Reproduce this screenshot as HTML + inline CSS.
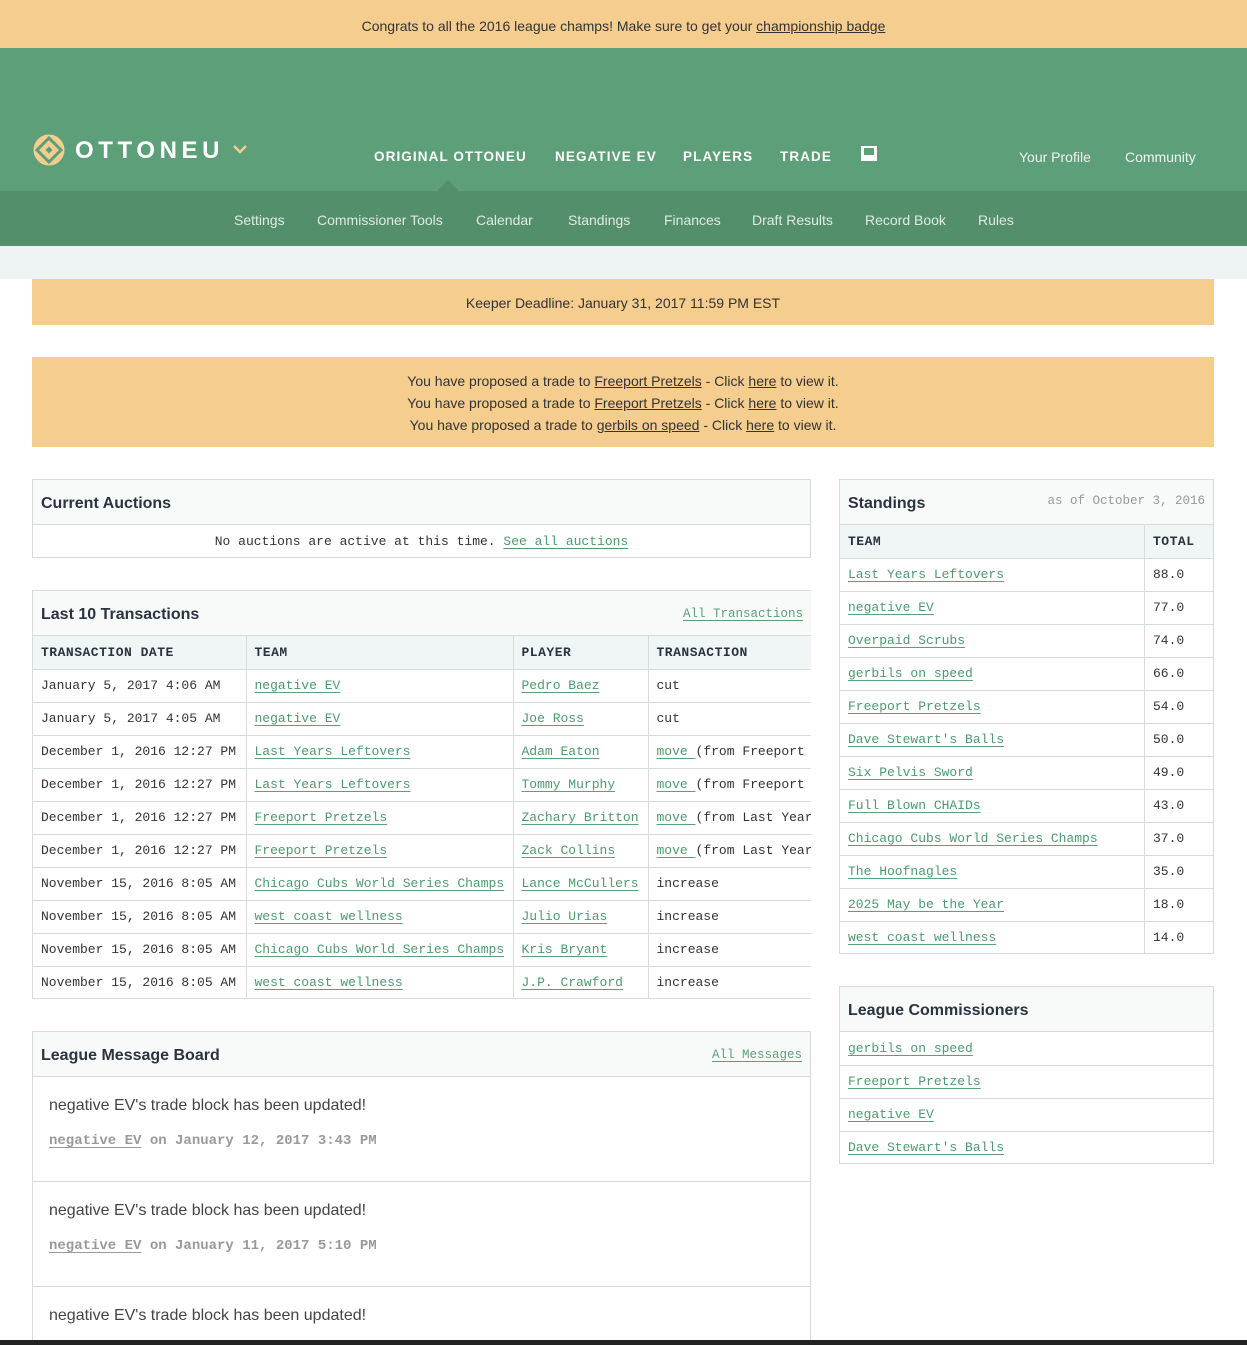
<!DOCTYPE html>
<html><head><meta charset="utf-8">
<style>
*{box-sizing:border-box;margin:0;padding:0}
html,body{width:1247px;height:1345px;overflow:hidden}
body{background:#fff;font-family:"Liberation Sans",sans-serif;color:#333;position:relative}
a{color:inherit}
.top{position:absolute;left:0;top:0;width:1247px;height:48px;background:#f5cd8e;text-align:center;font-size:14px;line-height:52px;color:#333}
.top a{text-decoration:underline}
.hdr{position:absolute;left:0;top:48px;width:1247px;height:143px;background:#5c9f79}
.sub{position:absolute;left:0;top:191px;width:1247px;height:55px;background:#548f6c}
.strip{position:absolute;left:0;top:246px;width:1247px;height:33px;background:#eef4f4}
.nav{position:absolute;top:149px;color:#fff;font-weight:bold;font-size:13.5px;letter-spacing:1.1px}
.rnav{position:absolute;top:149px;font-size:14px;color:#f0f4f0}
.sn{position:absolute;top:212px;color:#dfeae2;font-size:14px}
.banner{position:absolute;left:32px;width:1182px;background:#f5cd8e;text-align:center;font-size:14px;color:#333}
.banner a{text-decoration:underline}
.box{position:absolute;border:1px solid #d6dcdc;background:#fff;overflow:hidden}
.bh{height:45px;background:#f8fafa;border-bottom:1px solid #d6dcdc;padding-left:8px;font-weight:bold;font-size:16px;line-height:47px;color:#2a3340;position:relative}
.bh .r{position:absolute;right:8px;top:0;font-family:"Liberation Mono",monospace;font-weight:normal;font-size:12.5px;color:#5c9f79;text-decoration:underline;text-underline-offset:3px}
table{border-collapse:collapse;font-family:"Liberation Mono",monospace;font-size:13px;color:#333;white-space:nowrap}
td,th{height:33px;padding:0 8px;border-bottom:1px solid #d6dcdc;border-right:1px solid #d6dcdc;text-align:left}
th{background:#f0f5f5;font-weight:bold;color:#2a3340;letter-spacing:.5px}
td a{color:#4e9a6e;text-decoration:underline;text-decoration-color:#5c9f79;text-underline-offset:3px}
.msg{height:105px;border-bottom:1px solid #d6dcdc;padding:20px 0 0 16px}
.msg .t{font-size:16px;color:#444}
.msg .m{margin-top:18px;font-family:"Liberation Mono",monospace;font-size:14px;font-weight:bold;color:#999}
.msg .m a{text-decoration:underline;text-underline-offset:3px}
</style></head><body>
<div class="top">Congrats to all the 2016 league champs! Make sure to get your <a>championship badge</a></div>
<div class="hdr"></div>
<div class="sub"></div>
<div class="strip"></div>
<svg style="position:absolute;left:33px;top:134px" width="32" height="32" viewBox="0 0 32 32"><circle cx="16" cy="16" r="15.5" fill="#f5cd8e"/><path d="M16 4 L28 16 L16 28 L4 16Z" fill="none" stroke="#5c9f79" stroke-width="3"/><rect x="13.5" y="13.5" width="5" height="5" transform="rotate(45 16 16)" fill="#5c9f79"/></svg>
<div style="position:absolute;left:75px;top:137px;color:#fff;font-weight:bold;font-size:24px;letter-spacing:4.6px">OTTONEU</div>
<svg style="position:absolute;left:232px;top:144px" width="16" height="10"><path d="M2 2 L8 8 L14 2" stroke="#f5cd8e" stroke-width="2.5" fill="none"/></svg>
<div class="nav" style="left:374px">ORIGINAL OTTONEU</div>
<div class="nav" style="left:555px">NEGATIVE EV</div>
<div class="nav" style="left:683px">PLAYERS</div>
<div class="nav" style="left:780px">TRADE</div>
<div style="position:absolute;left:861px;top:146px;width:16px;height:15px;background:#fff"><div style="position:absolute;left:3px;top:2px;width:10px;height:7px;background:#5c9f79"></div></div>
<svg style="position:absolute;left:437px;top:180px" width="22" height="11"><path d="M0 11 L11 0 L22 11Z" fill="#548f6c"/></svg>
<div class="rnav" style="left:1019px">Your Profile</div>
<div class="rnav" style="left:1125px">Community</div>
<div class="sn" style="left:234px">Settings</div>
<div class="sn" style="left:317px">Commissioner Tools</div>
<div class="sn" style="left:476px">Calendar</div>
<div class="sn" style="left:568px">Standings</div>
<div class="sn" style="left:664px">Finances</div>
<div class="sn" style="left:752px">Draft Results</div>
<div class="sn" style="left:865px">Record Book</div>
<div class="sn" style="left:978px">Rules</div>

<div class="banner" style="top:279px;height:46px;line-height:48px">Keeper Deadline: January 31, 2017 11:59 PM EST</div>
<div class="banner" style="top:357px;height:90px;padding-top:13px;line-height:22px">You have proposed a trade to <a>Freeport Pretzels</a> - Click <a>here</a> to view it.<br>You have proposed a trade to <a>Freeport Pretzels</a> - Click <a>here</a> to view it.<br>You have proposed a trade to <a>gerbils on speed</a> - Click <a>here</a> to view it.</div>

<div class="box" style="left:32px;top:479px;width:779px;height:79px">
<div class="bh">Current Auctions</div>
<div style="text-align:center;font-family:'Liberation Mono',monospace;font-size:13px;line-height:33px">No auctions are active at this time. <a style="color:#4e9a6e;text-decoration:underline;text-underline-offset:3px">See all auctions</a></div>
</div>

<div class="box" style="left:32px;top:590px;width:779px;height:409px;border-right:none">
<div class="bh">Last 10 Transactions<span class="r">All Transactions</span></div>
<table style="width:800px">
<tr><th style="width:213px">TRANSACTION DATE</th><th style="width:267px">TEAM</th><th style="width:135px">PLAYER</th><th>TRANSACTION</th></tr>
<tr><td>January 5, 2017 4:06 AM</td><td><a>negative EV</a></td><td><a>Pedro Baez</a></td><td>cut</td></tr>
<tr><td>January 5, 2017 4:05 AM</td><td><a>negative EV</a></td><td><a>Joe Ross</a></td><td>cut</td></tr>
<tr><td>December 1, 2016 12:27 PM</td><td><a>Last Years Leftovers</a></td><td><a>Adam Eaton</a></td><td><a>move </a>(from Freeport</td></tr>
<tr><td>December 1, 2016 12:27 PM</td><td><a>Last Years Leftovers</a></td><td><a>Tommy Murphy</a></td><td><a>move </a>(from Freeport</td></tr>
<tr><td>December 1, 2016 12:27 PM</td><td><a>Freeport Pretzels</a></td><td><a>Zachary Britton</a></td><td><a>move </a>(from Last Year</td></tr>
<tr><td>December 1, 2016 12:27 PM</td><td><a>Freeport Pretzels</a></td><td><a>Zack Collins</a></td><td><a>move </a>(from Last Year</td></tr>
<tr><td>November 15, 2016 8:05 AM</td><td><a>Chicago Cubs World Series Champs</a></td><td><a>Lance McCullers</a></td><td>increase</td></tr>
<tr><td>November 15, 2016 8:05 AM</td><td><a>west coast wellness</a></td><td><a>Julio Urias</a></td><td>increase</td></tr>
<tr><td>November 15, 2016 8:05 AM</td><td><a>Chicago Cubs World Series Champs</a></td><td><a>Kris Bryant</a></td><td>increase</td></tr>
<tr><td>November 15, 2016 8:05 AM</td><td><a>west coast wellness</a></td><td><a>J.P. Crawford</a></td><td>increase</td></tr>
</table>
</div>

<div class="box" style="left:32px;top:1031px;width:779px;height:330px">
<div class="bh">League Message Board<span class="r">All Messages</span></div>
<div class="msg"><div class="t">negative EV's trade block has been updated!</div><div class="m"><a>negative EV</a> on January 12, 2017 3:43 PM</div></div>
<div class="msg"><div class="t">negative EV's trade block has been updated!</div><div class="m"><a>negative EV</a> on January 11, 2017 5:10 PM</div></div>
<div class="msg"><div class="t">negative EV's trade block has been updated!</div></div>
</div>

<div class="box" style="left:839px;top:479px;width:375px;height:475px">
<div class="bh">Standings<span class="r" style="color:#999;text-decoration:none;line-height:42px">as of October 3, 2016</span></div>
<table style="width:374px">
<tr><th>TEAM</th><th style="width:69px;border-right:none">TOTAL</th></tr>
<tr><td><a>Last Years Leftovers</a></td><td>88.0</td></tr>
<tr><td><a>negative EV</a></td><td>77.0</td></tr>
<tr><td><a>Overpaid Scrubs</a></td><td>74.0</td></tr>
<tr><td><a>gerbils on speed</a></td><td>66.0</td></tr>
<tr><td><a>Freeport Pretzels</a></td><td>54.0</td></tr>
<tr><td><a>Dave Stewart's Balls</a></td><td>50.0</td></tr>
<tr><td><a>Six Pelvis Sword</a></td><td>49.0</td></tr>
<tr><td><a>Full Blown CHAIDs</a></td><td>43.0</td></tr>
<tr><td><a>Chicago Cubs World Series Champs</a></td><td>37.0</td></tr>
<tr><td><a>The Hoofnagles</a></td><td>35.0</td></tr>
<tr><td><a>2025 May be the Year</a></td><td>18.0</td></tr>
<tr><td style="border-bottom:none"><a>west coast wellness</a></td><td style="border-bottom:none">14.0</td></tr>
</table>
</div>

<div class="box" style="left:839px;top:986px;width:375px;height:178px">
<div class="bh">League Commissioners</div>
<table style="width:374px">
<tr><td style="border-right:none"><a>gerbils on speed</a></td></tr>
<tr><td style="border-right:none"><a>Freeport Pretzels</a></td></tr>
<tr><td style="border-right:none"><a>negative EV</a></td></tr>
<tr><td style="border-right:none;border-bottom:none"><a>Dave Stewart's Balls</a></td></tr>
</table>
</div>
<div style="position:absolute;left:0;top:1340px;width:1247px;height:5px;background:#222"></div>
</body></html>
